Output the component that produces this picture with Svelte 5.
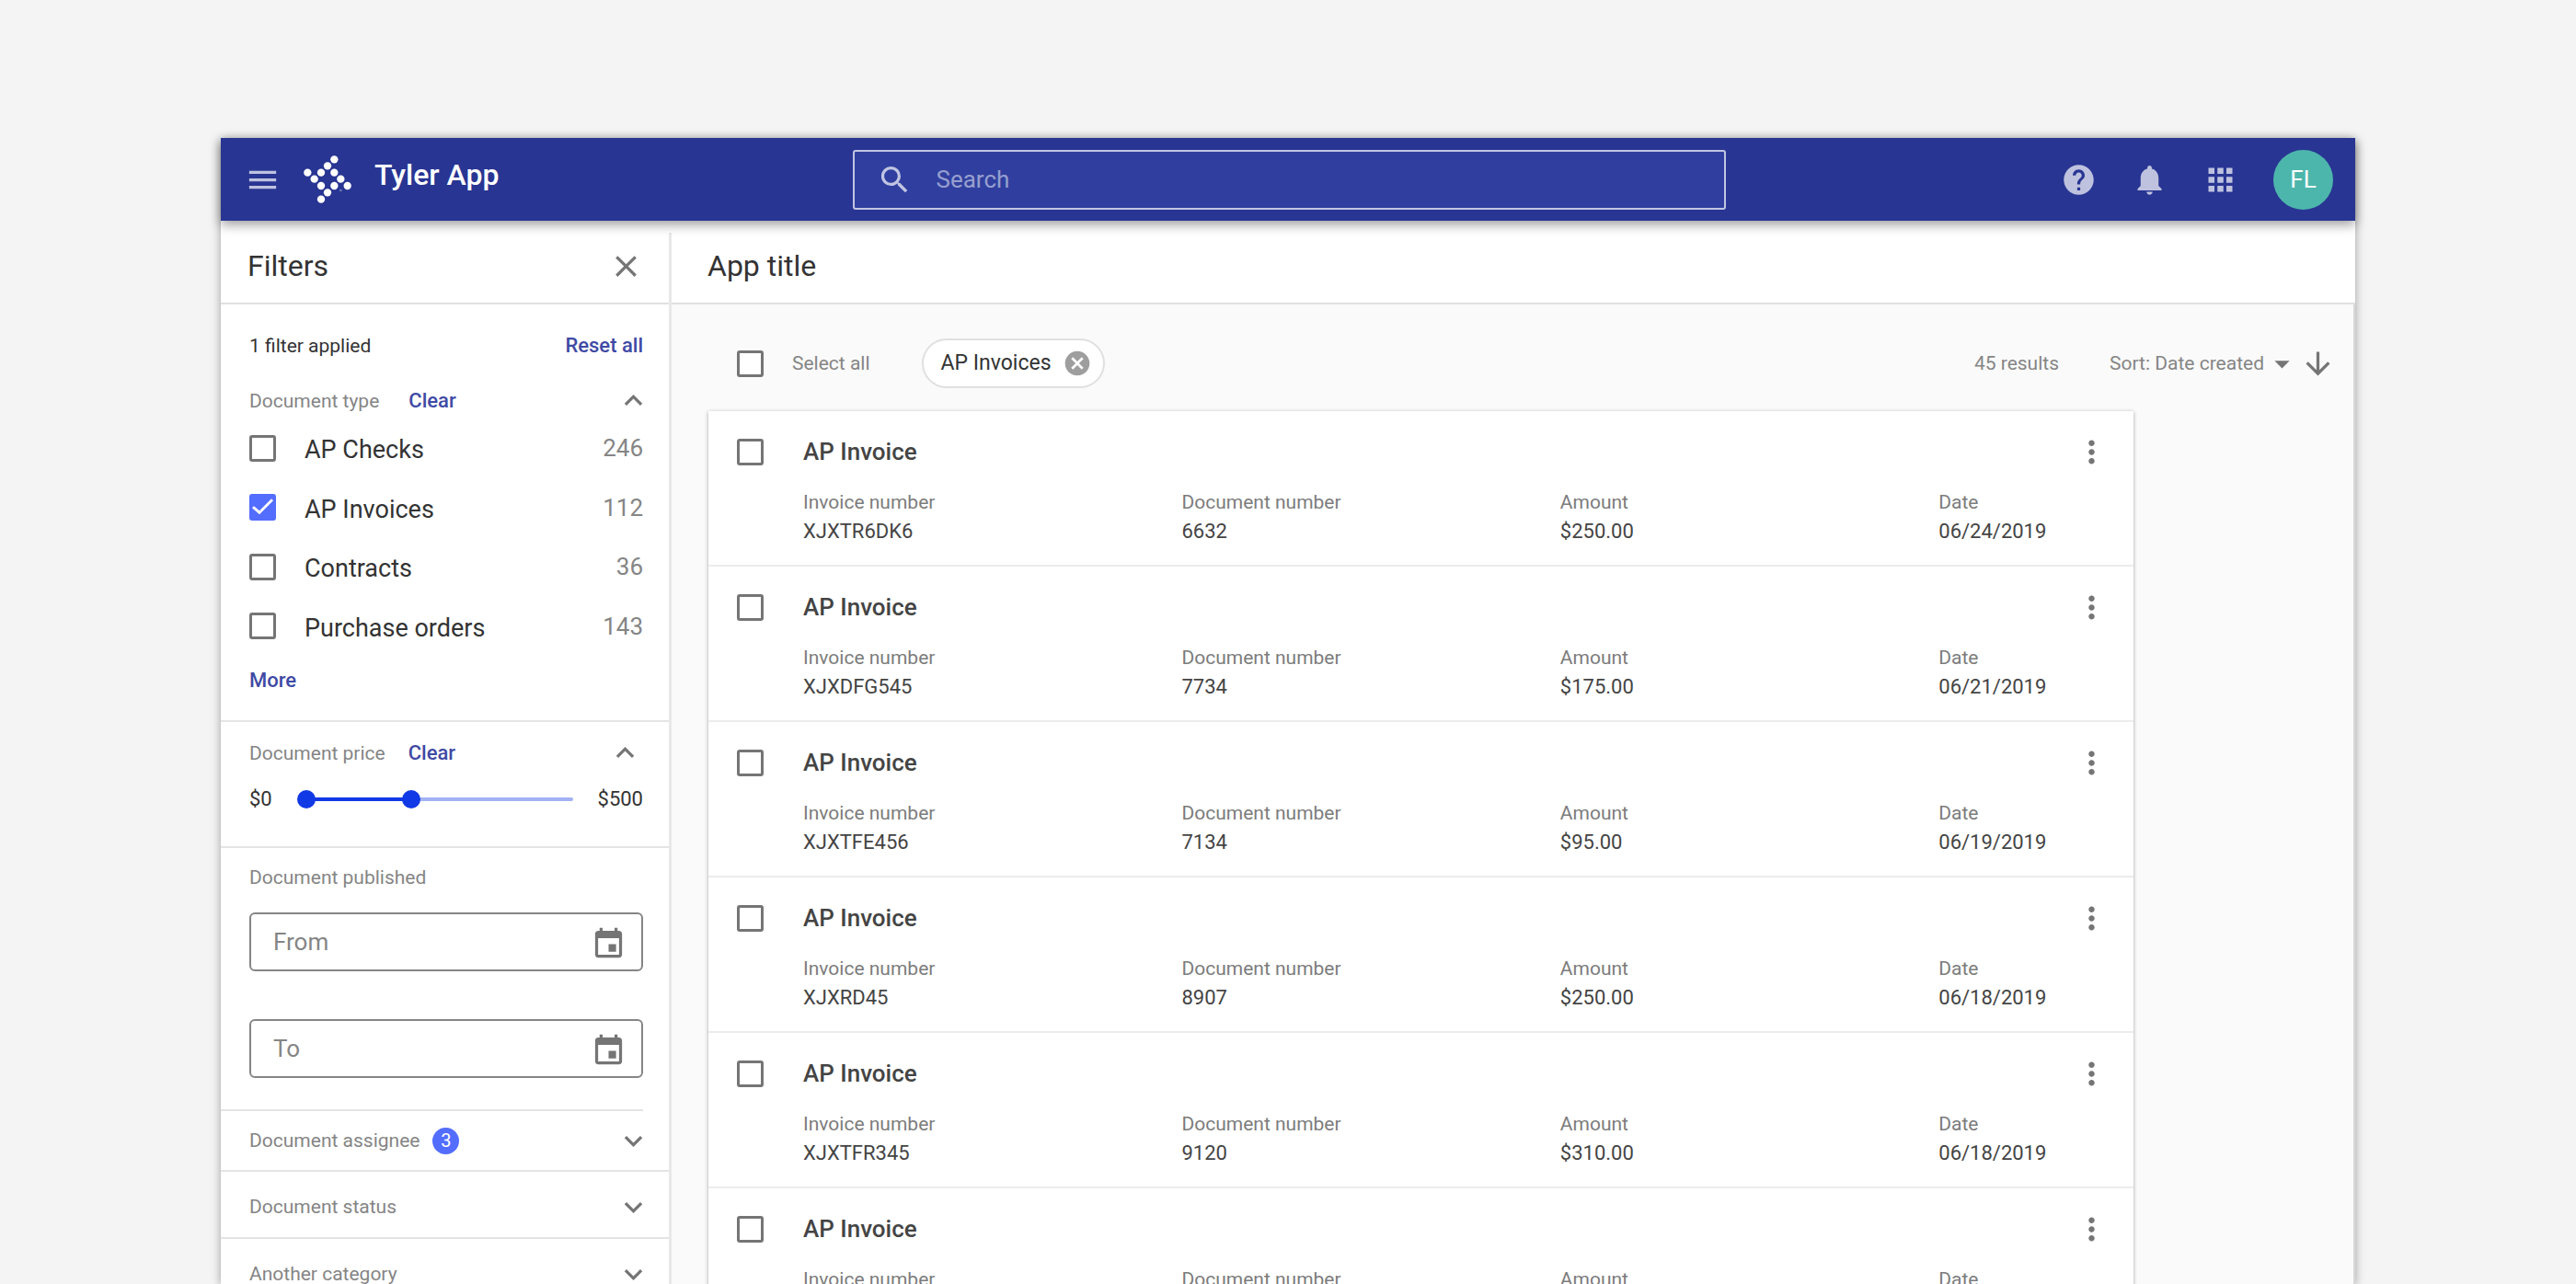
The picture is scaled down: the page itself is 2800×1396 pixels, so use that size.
<script>
    let query = "";
    let priceLow = 0;
    let priceHigh = 205;
    let priceMax = 500;
    let from = "";
    let to = "";
    let sort = "created";
    let allSelected = false;

    let documentTypes = [
        { name: "AP Checks", count: 246, checked: false },
        { name: "AP Invoices", count: 112, checked: true },
        { name: "Contracts", count: 36, checked: false },
        { name: "Purchase orders", count: 143, checked: false }
    ];

    let categories = [
        { name: "Document assignee", count: 3 },
        { name: "Document status" },
        { name: "Another category" }
    ];

    let invoices = [
        { number: "XJXTR6DK6", document: "6632", amount: "$250.00", date: "06/24/2019", selected: false },
        { number: "XJXDFG545", document: "7734", amount: "$175.00", date: "06/21/2019", selected: false },
        { number: "XJXTFE456", document: "7134", amount: "$95.00", date: "06/19/2019", selected: false },
        { number: "XJXRD45", document: "8907", amount: "$250.00", date: "06/18/2019", selected: false },
        { number: "XJXTFR345", document: "9120", amount: "$310.00", date: "06/18/2019", selected: false },
        { number: "XJXTFR346", document: "9121", amount: "$120.00", date: "06/17/2019", selected: false }
    ];

    let icons = {
        menu: "M3 18h18v-2H3v2zm0-5h18v-2H3v2zm0-7v2h18V6H3z",
        search: "M15.5 14h-.79l-.28-.27A6.471 6.471 0 0 0 16 9.5 6.5 6.5 0 1 0 9.5 16c1.61 0 3.09-.59 4.23-1.57l.27.28v.79l5 4.99L20.49 19l-4.99-5zm-6 0C7.01 14 5 11.99 5 9.5S7.01 5 9.5 5 14 7.01 14 9.5 11.99 14 9.5 14z",
        help: "M12 2C6.48 2 2 6.48 2 12s4.48 10 10 10 10-4.48 10-10S17.52 2 12 2zm1 17h-2v-2h2v2zm2.07-7.75l-.9.92C13.45 12.9 13 13.5 13 15h-2v-.5c0-1.1.45-2.1 1.17-2.83l1.24-1.26c.37-.36.59-.86.59-1.41 0-1.1-.9-2-2-2s-2 .9-2 2H8c0-2.21 1.79-4 4-4s4 1.79 4 4c0 .88-.36 1.68-.93 2.25z",
        bell: "M12 22c1.1 0 2-.9 2-2h-4c0 1.1.89 2 2 2zm6-6v-5c0-3.07-1.64-5.64-4.5-6.32V4c0-.83-.67-1.5-1.5-1.5s-1.5.67-1.5 1.5v.68C7.63 5.36 6 7.92 6 11v5l-2 2v1h16v-1l-2-2z",
        apps: "M4 8h4V4H4v4zm6 12h4v-4h-4v4zm-6 0h4v-4H4v4zm0-6h4v-4H4v4zm6 0h4v-4h-4v4zm6-10v4h4V4h-4zm-6 4h4V4h-4v4zm6 6h4v-4h-4v4zm0 6h4v-4h-4v4z",
        close: "M19 6.41L17.59 5 12 10.59 6.41 5 5 6.41 10.59 12 5 17.59 6.41 19 12 13.41 17.59 19 19 17.59 13.41 12z",
        less: "M12 8l-6 6 1.41 1.41L12 10.83l4.59 4.58L18 14z",
        more: "M16.59 8.59L12 13.17 7.41 8.59 6 10l6 6 6-6z",
        event: "M17 12h-5v5h5v-5zM16 1v2H8V1H6v2H5c-1.11 0-1.99.9-1.99 2L3 19c0 1.1.89 2 2 2h14c1.1 0 2-.9 2-2V5c0-1.1-.9-2-2-2h-1V1h-2zm3 18H5V8h14v11z",
        cancel: "M12 2C6.47 2 2 6.47 2 12s4.47 10 10 10 10-4.47 10-10S17.53 2 12 2zm5 13.59L15.59 17 12 13.41 8.41 17 7 15.59 10.59 12 7 8.41 8.41 7 12 10.59 15.59 7 17 8.41 13.41 12 17 15.59z",
        dropdown: "M7 10l5 5 5-5z",
        down: "M20 12l-1.41-1.41L13 16.17V4h-2v12.17l-5.58-5.59L4 12l8 8 8-8z",
        kebab: "M12 8c1.1 0 2-.9 2-2s-.9-2-2-2-2 .9-2 2 .9 2 2 2zm0 2c-1.1 0-2 .9-2 2s.9 2 2 2 2-.9 2-2-.9-2-2-2zm0 6c-1.1 0-2 .9-2 2s.9 2 2 2 2-.9 2-2-.9-2-2-2z"
    };

    let logoDots = [
        [100, 13], [78, 34], [13, 56], [57, 56], [100, 56], [35, 77],
        [121, 77], [57, 99], [100, 99], [143, 99], [78, 121], [57, 143]
    ];

    function clearTypes(){
        documentTypes = documentTypes.map(type => ({ ...type, checked: false }));
    }
    function clearPrice(){
        priceLow = 0;
        priceHigh = priceMax;
    }
    function resetAll(){
        clearTypes();
        clearPrice();
        from = "";
        to = "";
    }
    function removeType(name){
        documentTypes = documentTypes.map(type => type.name === name ? { ...type, checked: false } : type);
    }
    function toggleAll(){
        invoices = invoices.map(invoice => ({ ...invoice, selected: allSelected }));
    }

    $: applied = documentTypes.filter(type => type.checked);
</script>

{#snippet icon(name)}
    <svg class="icon" viewBox="0 0 24 24" aria-hidden="true"><path d={icons[name]} /></svg>
{/snippet}

<div class="page">
    <div class="app">
        <header>
            <div class="brand">
                <button aria-label="Menu">{@render icon("menu")}</button>
                <svg class="logo" viewBox="0 0 156 156" aria-hidden="true">
                    {#each logoDots as [cx, cy]}
                        <circle {cx} {cy} r="12.5" />
                    {/each}
                    <circle cx="121" cy="114" r="4" opacity="0.35" />
                </svg>
                <p class="app-name">Tyler App</p>
            </div>
            <label class="search">
                {@render icon("search")}
                <input type="text" placeholder="Search" aria-label="Search" bind:value={query}>
            </label>
            <div class="actions">
                <button aria-label="Help">{@render icon("help")}</button>
                <button aria-label="Notifications">{@render icon("bell")}</button>
                <button aria-label="Apps">{@render icon("apps")}</button>
                <button class="avatar" aria-label="Account">FL</button>
            </div>
        </header>

        <div class="body">
            <aside>
                <div class="title-bar">
                    <h2>Filters</h2>
                    <button aria-label="Close filters">{@render icon("close")}</button>
                </div>

                <section class="types">
                    <div class="summary">
                        <span>{applied.length} filter applied</span>
                        <button class="link" on:click={resetAll}>Reset all</button>
                    </div>
                    <div class="section-head">
                        <h3>Document type</h3>
                        <button class="link" on:click={clearTypes}>Clear</button>
                        <button class="toggle" aria-label="Collapse document type">{@render icon("less")}</button>
                    </div>
                    <ul>
                        {#each documentTypes as type}
                            <li>
                                <label>
                                    <input type="checkbox" bind:checked={type.checked}>
                                    <span>{type.name}</span>
                                </label>
                                <span class="count">{type.count}</span>
                            </li>
                        {/each}
                    </ul>
                    <button class="link show-more">More</button>
                </section>

                <section class="price">
                    <div class="section-head">
                        <h3>Document price</h3>
                        <button class="link" on:click={clearPrice}>Clear</button>
                        <button class="toggle" aria-label="Collapse document price">{@render icon("less")}</button>
                    </div>
                    <div class="range">
                        <span>$0</span>
                        <div class="slider">
                            <div class="track">
                                <div class="fill" style="margin-left: {priceLow / priceMax * 100}%; width: {(priceHigh - priceLow) / priceMax * 100}%"></div>
                            </div>
                            <input type="range" min="0" max={priceMax} step="5" aria-label="Lowest price" bind:value={priceLow}>
                            <input type="range" min="0" max={priceMax} step="5" aria-label="Highest price" bind:value={priceHigh}>
                        </div>
                        <span>${priceMax}</span>
                    </div>
                </section>

                <section class="published">
                    <h3>Document published</h3>
                    <div class="date-field">
                        <input type="text" placeholder="From" aria-label="From" bind:value={from}>
                        <button aria-label="Pick start date">{@render icon("event")}</button>
                    </div>
                    <div class="date-field">
                        <input type="text" placeholder="To" aria-label="To" bind:value={to}>
                        <button aria-label="Pick end date">{@render icon("event")}</button>
                    </div>
                </section>

                {#each categories as category}
                    <section class="category" class:counted={category.count}>
                        <h3>{category.name}</h3>
                        {#if category.count}
                            <span class="badge">{category.count}</span>
                        {/if}
                        <button class="toggle" aria-label="Expand {category.name}">{@render icon("more")}</button>
                    </section>
                {/each}
            </aside>

            <main>
                <div class="title-bar">
                    <h1>App title</h1>
                </div>
                <div class="results">
                    <div class="toolbar">
                        <label class="select-all">
                            <input type="checkbox" bind:checked={allSelected} on:change={toggleAll}>
                            <span>Select all</span>
                        </label>
                        {#each applied as type}
                            <div class="chip">
                                <span>{type.name}</span>
                                <button aria-label="Remove {type.name}" on:click={() => removeType(type.name)}>{@render icon("cancel")}</button>
                            </div>
                        {/each}
                        <span class="total">45 results</span>
                        <div class="sort">
                            <select bind:value={sort} aria-label="Sort">
                                <option value="created">Sort: Date created</option>
                                <option value="amount">Sort: Amount</option>
                            </select>
                            {@render icon("dropdown")}
                        </div>
                        <button class="direction" aria-label="Sort descending">{@render icon("down")}</button>
                    </div>

                    <div class="list">
                        {#each invoices as invoice}
                            <article>
                                <input type="checkbox" aria-label="Select {invoice.number}" bind:checked={invoice.selected}>
                                <div class="details">
                                    <h4>AP Invoice</h4>
                                    <dl>
                                        <div><dt>Invoice number</dt><dd>{invoice.number}</dd></div>
                                        <div><dt>Document number</dt><dd>{invoice.document}</dd></div>
                                        <div><dt>Amount</dt><dd>{invoice.amount}</dd></div>
                                        <div><dt>Date</dt><dd>{invoice.date}</dd></div>
                                    </dl>
                                </div>
                                <button class="kebab" aria-label="More actions">{@render icon("kebab")}</button>
                            </article>
                        {/each}
                    </div>
                </div>
            </main>
        </div>
    </div>
</div>

<style>
    :global(body) {
        background-color: #f4f4f4;
    }
    .page {
        height: 100vh;
        padding: 150px 240px 0;
        box-sizing: border-box;
        overflow: hidden;
        font-family: Roboto, "Liberation Sans", sans-serif;
        font-size: 22px;
        line-height: 32px;
        color: #333;
    }
    .app {
        height: 100%;
        display: flex;
        flex-direction: column;
        background-color: #fff;
        box-shadow: 0 2px 10px rgba(0, 0, 0, .35);
    }
    h1, h2, h3, h4, p, ul, dl, dd {
        margin: 0;
        padding: 0;
    }
    button, input, select {
        font: inherit;
        color: inherit;
        margin: 0;
        padding: 0;
        border: none;
        background: none;
        box-sizing: border-box;
    }
    button {
        flex: none;
    }
    button:hover {
        cursor: pointer;
    }
    .icon {
        display: block;
        flex: none;
        width: 39px;
        height: 39px;
        fill: currentColor;
    }

    header {
        display: grid;
        grid-template-columns: 1fr minmax(0, 949px) 1fr;
        align-items: center;
        flex: none;
        height: 90px;
        padding: 0 24px 0 26px;
        background-color: #283593;
        color: rgba(255, 255, 255, .7);
        box-shadow: 0 4px 12px rgba(0, 0, 0, .4);
        position: relative;
    }
    .brand {
        display: flex;
        align-items: center;
        gap: 25px;
    }
    .logo {
        width: 52px;
        height: 52px;
        fill: #fff;
    }
    .app-name {
        padding-bottom: 10px;
        font-size: 32px;
        font-weight: 500;
        color: #fff;
    }
    .search {
        display: flex;
        align-items: center;
        gap: 26px;
        height: 65px;
        padding: 0 24px;
        box-sizing: border-box;
        border: 2px solid rgba(255, 255, 255, .7);
        border-radius: 3px;
        background-color: #303f9f;
    }
    .search input {
        flex: 1;
        min-width: 0;
        font-size: 26px;
        color: #fff;
        outline: none;
    }
    .search input::placeholder {
        color: rgba(255, 255, 255, .5);
    }
    .actions {
        display: flex;
        align-items: center;
        justify-content: flex-end;
        gap: 38px;
    }
    .avatar {
        width: 65px;
        height: 65px;
        border-radius: 50%;
        background-color: #4db6ac;
        color: #fff;
        font-size: 26px;
    }

    .body {
        flex: 1;
        min-height: 0;
        display: grid;
        grid-template-columns: 490px minmax(0, 1fr);
        padding-top: 13px;
    }
    aside {
        overflow: hidden;
        border-right: 3px solid #e8e8e8;
    }
    main {
        display: flex;
        flex-direction: column;
        min-height: 0;
    }
    .title-bar {
        display: flex;
        align-items: center;
        justify-content: space-between;
        flex: none;
        height: 78px;
        padding: 0 27px 4px 29px;
        box-sizing: border-box;
        border-bottom: 2px solid #e0e0e0;
    }
    main .title-bar {
        padding-left: 39px;
    }
    h1, h2 {
        font-size: 32px;
        font-weight: 400;
    }
    h3 {
        font-size: 21px;
        font-weight: 400;
        color: #858585;
    }
    .toggle, .title-bar button, .date-field button, .direction, .kebab {
        color: #757575;
    }
    .link {
        color: #3f4aa4;
        font-weight: 500;
    }

    section {
        padding: 0 19px 0 31px;
        border-bottom: 2px solid #e4e4e4;
    }
    .types {
        padding-top: 29px;
        padding-bottom: 27px;
    }
    .summary {
        display: flex;
        justify-content: space-between;
        margin: 0 9px 24px 0;
        font-size: 21px;
    }
    .summary .link {
        font-size: 22px;
    }
    .section-head {
        display: flex;
        align-items: center;
        gap: 32px;
    }
    .toggle {
        margin-left: auto;
    }
    ul {
        display: grid;
        grid-auto-rows: 1fr;
        height: 258px;
        list-style: none;
    }
    li {
        display: flex;
        align-items: center;
        justify-content: space-between;
        margin-right: 9px;
        font-size: 27px;
    }
    li label, .select-all {
        display: flex;
        align-items: center;
        gap: 31px;
    }
    li label span {
        padding-top: 4px;
    }
    .count {
        color: #858585;
        font-size: 26px;
    }
    .show-more {
        display: block;
        margin-top: 11px;
    }

    input[type="checkbox"] {
        appearance: none;
        flex: none;
        width: 29px;
        height: 29px;
        border: 3px solid #757575;
        border-radius: 3px;
        background-color: #fff;
    }
    input[type="checkbox"]:checked {
        border: none;
        background-color: #536dfe;
    }
    input[type="checkbox"]:checked::before {
        content: "";
        display: block;
        width: 29px;
        height: 29px;
        background-color: #fff;
        clip-path: polygon(3px 15px, 5px 13px, 11px 18px, 24px 5px, 26px 7px, 11px 22px);
    }

    .price {
        padding-top: 14px;
        padding-right: 28px;
        padding-bottom: 35px;
    }
    .price .section-head {
        gap: 25px;
    }
    .range {
        display: flex;
        align-items: center;
        justify-content: space-between;
        margin-top: 15px;
    }
    .slider {
        flex: 1;
        display: grid;
        align-items: center;
        margin: 0 27px;
    }
    .slider > * {
        grid-area: 1 / 1;
    }
    .track {
        height: 4px;
        margin-left: 10px;
        border-radius: 2px;
        background-color: #a3b1f5;
    }
    .fill {
        height: 4px;
        background-color: #1139e5;
    }
    input[type="range"] {
        appearance: none;
        width: 100%;
        height: 20px;
        pointer-events: none;
    }
    input[type="range"]::-webkit-slider-thumb {
        appearance: none;
        width: 20px;
        height: 20px;
        border-radius: 50%;
        background-color: #1139e5;
        pointer-events: auto;
    }

    .published {
        margin-right: 28px;
        padding: 16px 0 34px 31px;
    }
    .date-field {
        display: flex;
        align-items: center;
        height: 64px;
        padding: 0 16px 0 24px;
        box-sizing: border-box;
        border: 2px solid #858585;
        border-radius: 6px;
    }
    h3 + .date-field {
        margin: 22px 0 52px;
    }
    .date-field input {
        flex: 1;
        min-width: 0;
        font-size: 26px;
        outline: none;
    }
    .date-field input::placeholder {
        color: #858585;
    }
    .date-field button {
        padding-top: 4px;
    }

    .category {
        display: flex;
        align-items: center;
        height: 66px;
        padding-top: 5px;
    }
    .counted {
        height: 64px;
        padding-top: 0;
    }
    .badge {
        width: 29px;
        height: 29px;
        margin-left: 14px;
        border-radius: 50%;
        background-color: #536dfe;
        color: #fff;
        font-size: 20px;
        line-height: 29px;
        text-align: center;
    }

    .results {
        flex: 1;
        min-height: 0;
        overflow: hidden;
        padding: 0 19px 0 40px;
        border-right: 2px solid #d8d8d8;
        background-color: #fafafa;
    }
    .toolbar {
        display: flex;
        align-items: center;
        height: 116px;
        padding: 12px 0 0 31px;
        box-sizing: border-box;
        font-size: 21px;
        color: #858585;
    }
    .chip {
        display: flex;
        align-items: center;
        gap: 12px;
        height: 54px;
        margin-left: 56px;
        padding: 0 12px 0 19px;
        box-sizing: border-box;
        border: 2px solid #e0e0e0;
        border-radius: 27px;
        background-color: #fff;
        color: #333;
        font-size: 23px;
    }
    .chip button {
        color: #9e9e9e;
    }
    .chip .icon {
        width: 32px;
        height: 32px;
    }
    .total {
        margin-left: auto;
    }
    .sort {
        display: flex;
        align-items: center;
        margin-left: 55px;
    }
    .sort select {
        appearance: none;
        padding-right: 39px;
        outline: none;
    }
    .sort .icon {
        margin-left: -39px;
        color: #757575;
        pointer-events: none;
    }

    .list {
        max-width: 1549px;
        background-color: #fff;
        box-shadow: 0 1px 4px rgba(0, 0, 0, .35);
    }
    article {
        display: flex;
        align-items: flex-start;
        padding: 30px 26px 20px 31px;
        border-bottom: 2px solid #ececec;
    }
    .details {
        flex: 1;
        margin-left: 43px;
        /* the date column runs on under the menu button */
        margin-right: -39px;
    }
    h4 {
        font-size: 26px;
        font-weight: 500;
        line-height: 28px;
        color: #444;
    }
    dl {
        display: grid;
        grid-template-columns: repeat(3, 2fr) 1fr;
        margin-top: 25px;
        margin-right: -20px;
    }
    dt {
        font-size: 21px;
        color: #7c7c7c;
    }
    dd {
        color: #444;
    }
    .kebab {
        position: relative;
        margin-top: -5px;
    }
</style>
